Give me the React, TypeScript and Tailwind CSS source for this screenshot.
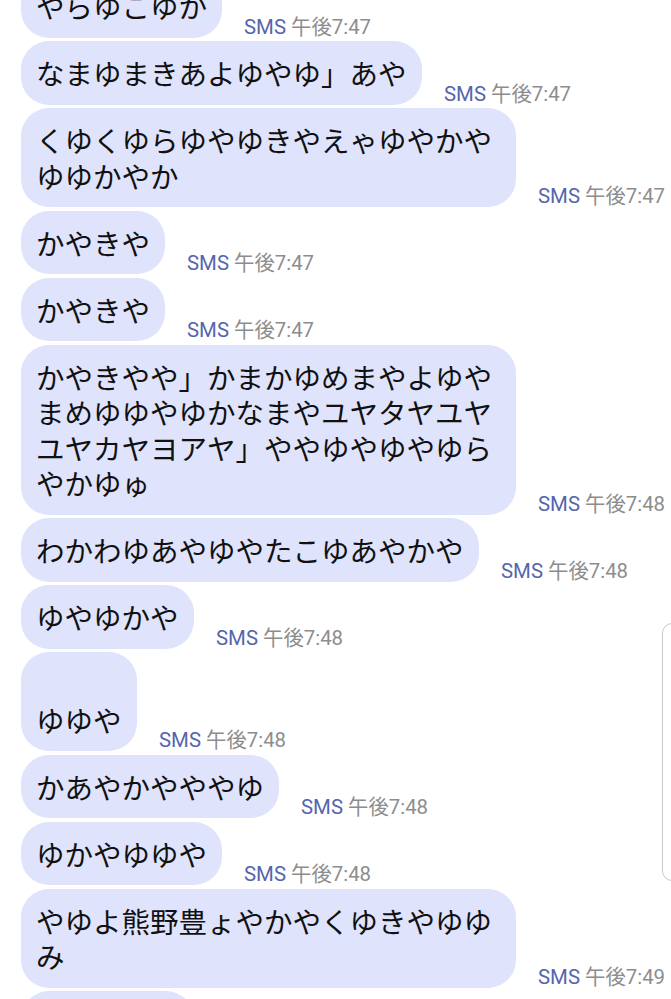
import React from "react";

type Msg = {
  lines: string[];
  time: string;
  wide?: boolean;
};

const messages: Msg[] = [
  { lines: ["やらゆこゆか"], time: "7:47" },
  { lines: ["なまゆまきあよゆやゆ」あや"], time: "7:47" },
  { lines: ["くゆくゆらゆやゆきやえゃゆやかや", "ゆゆかやか"], time: "7:47", wide: true },
  { lines: ["かやきや"], time: "7:47" },
  { lines: ["かやきや"], time: "7:47" },
  {
    lines: [
      "かやきやや」かまかゆめまやよゆや",
      "まめゆゆやゆかなまやユヤタヤユヤ",
      "ユヤカヤヨアヤ」ややゆやゆやゆら",
      "やかゆゅ",
    ],
    time: "7:48",
    wide: true,
  },
  { lines: ["わかわゆあやゆやたこゆあやかや"], time: "7:48" },
  { lines: ["ゆやゆかや"], time: "7:48" },
  { lines: ["", "ゆゆや"], time: "7:48" },
  { lines: ["かあやかやややゆ"], time: "7:48" },
  { lines: ["ゆかやゆゆや"], time: "7:48" },
  { lines: ["やゆよ熊野豊ょやかやくゆきやゆゆ", "み"], time: "7:49", wide: true },
  { lines: ["ゆやゆかや"], time: "7:49" },
];

function Bubble({ msg }: { msg: Msg }) {
  return (
    <div className="flex items-end">
      <div
        className={`bg-[#dfe3fb] rounded-[28px] px-[15px] py-[14px] text-[28.5px] leading-[35.5px] text-[#111] whitespace-nowrap ${
          msg.wide ? "w-[495px]" : ""
        }`}
      >
        {msg.lines.map((l, i) => (
          <div key={i} className="h-[35.5px]">
            {l}
          </div>
        ))}
      </div>
      <div className="ml-[22px] mb-[1px] h-[22px] w-[130px]">
        <span className="inline-block origin-bottom-left scale-x-[0.97] whitespace-nowrap text-[21px] leading-[22px] font-['Roboto','Noto_Sans_CJK_JP',sans-serif]">
          <span className="text-[#5565ad]">SMS</span>
          <span className="text-[#8d8d8d]"> 午後{msg.time}</span>
        </span>
      </div>
    </div>
  );
}

export default function App() {
  return (
    <div className="relative w-[671px] h-[999px] overflow-hidden bg-white font-['Noto_Sans_CJK_JP','Noto_Sans',sans-serif]">
      <div className="flex flex-col gap-[3.5px] pl-[21px] mt-[-26px]">
        {messages.map((m, i) => (
          <Bubble key={i} msg={m} />
        ))}
      </div>

      {/* scroll handle peeking in from the right edge */}
      <div className="absolute left-[662px] top-[623px] w-[24px] h-[258px] border-[1.5px] border-[#c9c9c9] rounded-[10px]" />
    </div>
  );
}
